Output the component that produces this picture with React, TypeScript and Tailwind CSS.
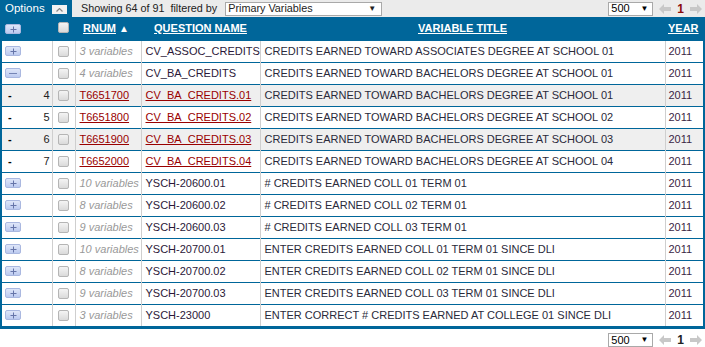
import React from "react";

type Row =
  | { kind: "parent"; open: boolean; count: string; q: string; title: string }
  | { kind: "child"; n: number; r: string; q: string; title: string; shade: boolean };

const rows: Row[] = [
  { kind: "parent", open: false, count: "3 variables", q: "CV_ASSOC_CREDITS", title: "CREDITS EARNED TOWARD ASSOCIATES DEGREE AT SCHOOL 01" },
  { kind: "parent", open: true, count: "4 variables", q: "CV_BA_CREDITS", title: "CREDITS EARNED TOWARD BACHELORS DEGREE AT SCHOOL 01" },
  { kind: "child", n: 4, r: "T6651700", q: "CV_BA_CREDITS.01", title: "CREDITS EARNED TOWARD BACHELORS DEGREE AT SCHOOL 01", shade: true },
  { kind: "child", n: 5, r: "T6651800", q: "CV_BA_CREDITS.02", title: "CREDITS EARNED TOWARD BACHELORS DEGREE AT SCHOOL 02", shade: false },
  { kind: "child", n: 6, r: "T6651900", q: "CV_BA_CREDITS.03", title: "CREDITS EARNED TOWARD BACHELORS DEGREE AT SCHOOL 03", shade: true },
  { kind: "child", n: 7, r: "T6652000", q: "CV_BA_CREDITS.04", title: "CREDITS EARNED TOWARD BACHELORS DEGREE AT SCHOOL 04", shade: false },
  { kind: "parent", open: false, count: "10 variables", q: "YSCH-20600.01", title: "# CREDITS EARNED COLL 01 TERM 01" },
  { kind: "parent", open: false, count: "8 variables", q: "YSCH-20600.02", title: "# CREDITS EARNED COLL 02 TERM 01" },
  { kind: "parent", open: false, count: "9 variables", q: "YSCH-20600.03", title: "# CREDITS EARNED COLL 03 TERM 01" },
  { kind: "parent", open: false, count: "10 variables", q: "YSCH-20700.01", title: "ENTER CREDITS EARNED COLL 01 TERM 01 SINCE DLI" },
  { kind: "parent", open: false, count: "8 variables", q: "YSCH-20700.02", title: "ENTER CREDITS EARNED COLL 02 TERM 01 SINCE DLI" },
  { kind: "parent", open: false, count: "9 variables", q: "YSCH-20700.03", title: "ENTER CREDITS EARNED COLL 03 TERM 01 SINCE DLI" },
  { kind: "parent", open: false, count: "3 variables", q: "YSCH-23000", title: "ENTER CORRECT # CREDITS EARNED AT COLLEGE 01 SINCE DLI" },
];

function ExpandBtn({ open }: { open: boolean }) {
  return (
    <div className="w-[16px] h-[10px] rounded-[2px] border border-[#aab8e0] bg-gradient-to-b from-[#dfe6f8] to-[#bccaf0] flex items-center justify-center">
      {open ? (
        <div className="w-[8px] h-[1px] bg-[#7585b5]" />
      ) : (
        <svg width="7" height="7" viewBox="0 0 7 7">
          <path d="M3.5 0.5v6M0.5 3.5h6" stroke="#6574a8" strokeWidth="1" />
        </svg>
      )}
    </div>
  );
}

function Check() {
  return (
    <div className="w-[11px] h-[11px] rounded-[2px] border border-[#b5b5b5] bg-gradient-to-b from-[#f4f4f4] to-[#dadada] mx-auto" />
  );
}

function Arrow({ dir }: { dir: "l" | "r" }) {
  return (
    <svg width="12" height="10" viewBox="0 0 12 10">
      {dir === "l" ? (
        <path d="M0 5 L5 0 L5 3 L12 3 L12 7 L5 7 L5 10 Z" fill="#c8c8c8" />
      ) : (
        <path d="M12 5 L7 0 L7 3 L0 3 L0 7 L7 7 L7 10 Z" fill="#c8c8c8" />
      )}
    </svg>
  );
}

function SmallSelect() {
  return (
    <div className="w-[45px] h-[14px] border border-[#a9a9a9] bg-white flex items-center justify-between pl-[2px] pr-[4px] text-[11px] leading-none text-black">
      <span>500</span>
      <span className="text-[8px]">▼</span>
    </div>
  );
}

export default function App() {
  const td = "h-[22px] border-t border-t-[#00669a] border-l border-l-[#cfcfcf] p-0 align-middle";
  return (
    <div className="w-[705px] h-[347px] bg-white text-[11px] leading-none" style={{ fontFamily: '"Liberation Sans", Arial, sans-serif' }}>
      {/* top bar */}
      <div className="flex h-[17px]">
        <div className="w-[72px] bg-[#00669a] flex items-center pl-[5px] gap-[7px]">
          <span className="text-white text-[11.5px]">Options</span>
          <div className="w-[15px] h-[9px] bg-[#f2f2f2] flex items-center justify-center mt-[2px]">
            <svg width="7" height="4" viewBox="0 0 7 4">
              <path d="M0.5 3.5 L3.5 0.5 L6.5 3.5" stroke="#888" strokeWidth="1.2" fill="none" />
            </svg>
          </div>
        </div>
        <div className="flex-1 bg-[#ebebeb] flex items-center pl-[9px] text-[10.8px] text-[#222]">
          <span className="whitespace-pre">Showing 64 of 91  filtered by</span>
          <div className="ml-[8px] w-[157px] h-[14px] border border-[#a9a9a9] bg-white flex items-center justify-between pl-[2px] pr-[5px]">
            <span>Primary Variables</span>
            <span className="text-[8px]">▼</span>
          </div>
          <div className="ml-auto flex items-center gap-[6px] pr-[3px]">
            <SmallSelect />
            <Arrow dir="l" />
            <span className="font-bold text-[#8a0b0b] text-[12px]">1</span>
            <Arrow dir="r" />
          </div>
        </div>
      </div>
      {/* table */}
      <div className="bg-[#00669a] px-[2px] pb-[3px]">
        <table className="w-full border-collapse table-fixed">
          <colgroup>
            <col className="w-[50px]" />
            <col className="w-[23px]" />
            <col className="w-[66px]" />
            <col className="w-[119px]" />
            <col className="w-[405px]" />
            <col className="w-[38px]" />
          </colgroup>
          <thead>
            <tr className="h-[23px] text-white font-bold">
              <th className="p-0 pl-[3px] text-left align-middle">
                <div className="mt-[2px]"><ExpandBtn open={false} /></div>
              </th>
              <th className="p-0 align-middle"><div className="mt-[-2px]"><Check /></div></th>
              <th className="p-0 pl-[8px] text-left align-middle">
                <span className="underline">RNUM</span>
                <span className="text-[10px] ml-[3px]">▲</span>
              </th>
              <th className="p-0 text-center align-middle"><span className="underline">QUESTION NAME</span></th>
              <th className="p-0 text-center align-middle"><span className="underline">VARIABLE TITLE</span></th>
              <th className="p-0 pl-[3px] text-left align-middle"><span className="underline">YEAR</span></th>
            </tr>
          </thead>
          <tbody>
            {rows.map((r, i) => {
              const bg = r.kind === "child" && r.shade ? "bg-[#efefef]" : "bg-white";
              return (
                <tr key={i} className={bg}>
                  <td className={`${td} border-l-0`}>
                    {r.kind === "parent" ? (
                      <div className="pl-[3px]"><ExpandBtn open={r.open} /></div>
                    ) : (
                      <div className="flex items-center justify-between pl-[6px] pr-[2px]">
                        <span className="font-bold text-black">-</span>
                        <span className="text-[#222]">{r.n}</span>
                      </div>
                    )}
                  </td>
                  <td className={td}><Check /></td>
                  <td className={`${td} pl-[4px] whitespace-nowrap`}>
                    {r.kind === "parent" ? (
                      <span className="italic text-[#999]">{r.count}</span>
                    ) : (
                      <span className="underline text-[#990000]">{r.r}</span>
                    )}
                  </td>
                  <td className={`${td} pl-[4px] whitespace-nowrap overflow-hidden`}>
                    {r.kind === "parent" ? (
                      <span className="text-[#2b1838]">{r.q}</span>
                    ) : (
                      <span className="underline text-[#990000]">{r.q}</span>
                    )}
                  </td>
                  <td className={`${td} pl-[4px] whitespace-nowrap text-[#2a2a3a]`}>{r.title}</td>
                  <td className={`${td} pl-[3px] text-[#3b1f45]`}>2011</td>
                </tr>
              );
            })}
          </tbody>
        </table>
      </div>
      {/* footer */}
      <div className="flex items-center justify-end gap-[6px] pr-[3px] pt-[4px]">
        <SmallSelect />
        <Arrow dir="l" />
        <span className="font-bold text-[#222] text-[12px]">1</span>
        <Arrow dir="r" />
      </div>
    </div>
  );
}
